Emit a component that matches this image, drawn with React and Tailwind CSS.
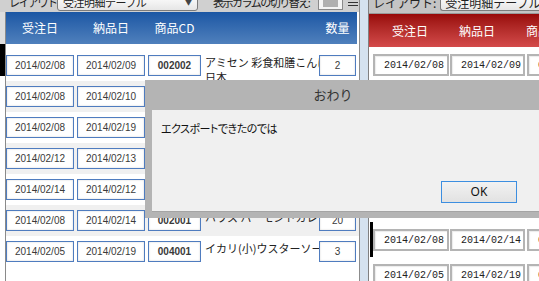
import React from "react";

const jp = "font-['Noto_Sans_CJK_JP',sans-serif]";

const rows = [
  { order: "2014/02/08", delivery: "2014/02/09", code: "002002", name: ["アミセン 彩食和膳こんにゃく", "日本"], qty: "2" },
  { order: "2014/02/08", delivery: "2014/02/10", code: "003105", name: ["ハウス ジャワカレー 中辛"], qty: "5" },
  { order: "2014/02/08", delivery: "2014/02/19", code: "001204", name: ["キッコーマン しょうゆ"], qty: "12" },
  { order: "2014/02/12", delivery: "2014/02/13", code: "002010", name: ["ミツカン 穀物酢"], qty: "6" },
  { order: "2014/02/14", delivery: "2014/02/12", code: "003001", name: ["日清 サラダ油"], qty: "4" },
  { order: "2014/02/08", delivery: "2014/02/14", code: "002001", name: ["ハウス バーモントカレー"], qty: "20" },
  { order: "2014/02/05", delivery: "2014/02/19", code: "004001", name: ["イカリ(小)ウスターソース"], qty: "3" },
];

// blue bordered field used in the left grid
const BlueBox = ({ w, bold, children }) => (
  <div
    className={`${w} h-[21px] shrink-0 flex items-center justify-center bg-white border border-[#4f7cbf] shadow-[inset_0_0_2px_rgba(0,0,0,0.18)] text-[#3a3a3a] font-['Liberation_Sans',sans-serif] ${
      bold ? "text-[10px] font-bold" : "text-[10px]"
    }`}
  >
    {children}
  </div>
);

// gray bordered field used in the right grid
const GrayBox = ({ w, children }) => (
  <div
    className={`${w} h-[22px] shrink-0 flex items-center pl-[9px] bg-white border-2 border-[#b4b4b4] shadow-[inset_1px_1px_1px_rgba(0,0,0,0.08)] text-[10px] text-[#222] font-['Liberation_Mono',monospace]`}
  >
    {children}
  </div>
);

const LeftWindow = () => (
  <div className="w-[360px] shrink-0 flex flex-col bg-white border-r border-[#8c8c8c]">
    {/* toolbar, mostly scrolled off the top */}
    <div className={`-mt-[8px] h-[20px] shrink-0 flex items-center bg-[#d0d0d0] text-[11px] text-[#222] whitespace-nowrap overflow-hidden ${jp}`}>
      <span className="ml-[9px] w-[48px] shrink-0 overflow-hidden tracking-[-1.5px]">レイアウト:</span>
      <div className="w-[141px] h-[17px] shrink-0 flex items-center justify-between px-[5px] rounded-[3px] border border-[#7c7c7c] bg-linear-to-b from-white to-[#e6e6e6]">
        <span className="tracking-[-0.5px]">受注明細テーブル</span>
        <span className="text-[7px] text-[#444]">▼</span>
      </div>
      <span className="ml-[15px] w-[105px] shrink-0 overflow-hidden tracking-[-1.5px]">表示カラムの切り替え:</span>
      <div className="w-[25px] h-[16px] shrink-0 border border-[#8a8a8a] bg-[#f4f4f4] flex items-center justify-center">
        <div className="w-[15px] h-[10px] bg-[#b0b0b0]" />
      </div>
      <div className="ml-[5px] w-[10px] shrink-0 flex flex-col gap-[2px]">
        <div className="h-px bg-[#333]" />
        <div className="h-px bg-[#333]" />
        <div className="h-px bg-[#333]" />
      </div>
    </div>

    <div className="flex flex-1">
      <div className="w-[5px] flex flex-col bg-white">
        <div className="h-[32px] bg-[#dedede]" />
        <div className="h-[32px] bg-black" />
      </div>
      <div className="w-px bg-[#8a8a8a]" />

      <div className="flex-1 flex flex-col">
        <div className={`h-[32px] mr-[2px] flex items-center bg-linear-to-b from-[#1b57a4] to-[#4f80bc] text-[12px] text-white ${jp}`}>
          <div className="w-[68px] text-center">受注日</div>
          <div className="ml-[3px] w-[68px] text-center">納品日</div>
          <div className="ml-[3px] w-[53px] text-center">商品CD</div>
          <div className="ml-[4px] w-[114px]" />
          <div className="w-[37px] text-center">数量</div>
        </div>
        <div className="h-[6px]" />

        {rows.map((r, i) => (
          <div
            key={i}
            className={`h-[31px] flex items-start pt-[5px] overflow-hidden ${i % 2 ? "bg-[#f0f0f0]" : "bg-white"}`}
          >
            <BlueBox w="w-[68px]">{r.order}</BlueBox>
            <div className="ml-[3px]">
              <BlueBox w="w-[68px]">{r.delivery}</BlueBox>
            </div>
            <div className="ml-[3px]">
              <BlueBox w="w-[53px]" bold>
                {r.code}
              </BlueBox>
            </div>
            <div className={`ml-[4px] w-[114px] h-[26px] overflow-hidden text-[11px] leading-[15px] text-[#222] ${jp}`}>
              {r.name.map((line, j) => (
                <div key={j} className="whitespace-nowrap">
                  {line}
                </div>
              ))}
            </div>
            <BlueBox w="w-[37px]">{r.qty}</BlueBox>
          </div>
        ))}
      </div>
    </div>
  </div>
);

const RightWindow = () => (
  <div className="flex-1 flex flex-col bg-white border-l border-[#808080] overflow-hidden">
    <div className={`-mt-[8px] h-[22px] shrink-0 flex items-center bg-[#c4c4c4] border-b border-[#999] text-[12px] text-[#222] ${jp}`}>
      <span className="ml-[4px] whitespace-nowrap">レイアウト:</span>
      <div className="ml-[4px] flex-1 h-[17px] flex items-center px-[4px] rounded-l-[3px] border border-r-0 border-[#7c7c7c] bg-linear-to-b from-white to-[#e6e6e6] whitespace-nowrap">
        受注明細テーブル
      </div>
    </div>

    <div className={`h-[33px] shrink-0 flex items-center pl-[23px] gap-[31px] bg-linear-to-b from-[#980808] to-[#d44a4a] text-[12px] text-white whitespace-nowrap ${jp}`}>
      <span>受注日</span>
      <span>納品日</span>
      <span>商品CD</span>
    </div>
    <div className="h-px bg-[#c8c8c8]" />

    <div className="flex flex-1">
      <div className="w-[4px] flex flex-col">
        <div className="h-[175px]" />
        <div className="ml-[1px] w-[3px] h-[35px] bg-black" />
      </div>
      <div className="flex-1 flex flex-col">
        {rows.map((r, i) => (
          <div key={i} className="h-[35px] shrink-0 flex items-start pt-[7px] bg-white">
            <GrayBox w="w-[76px]">{r.order}</GrayBox>
            <div className="ml-[1px]">
              <GrayBox w="w-[75px]">{r.delivery}</GrayBox>
            </div>
            <div className="ml-[2px]">
              <GrayBox w="w-[76px]">{r.code}</GrayBox>
            </div>
          </div>
        ))}
      </div>
    </div>
  </div>
);

const Dialog = () => (
  <div className="absolute left-[145px] top-[80px] right-0 h-[138px] flex flex-col bg-[#b4b4b4]">
    <div className={`h-[30px] shrink-0 flex items-center justify-center pr-[18px] text-[13px] text-[#333] ${jp}`}>
      おわり
    </div>
    <div className="ml-[7px] h-[102px] flex flex-col justify-between bg-[#f0f0f0] border-b border-[#a4a4a4]">
      <div className={`pl-[9px] pt-[11px] text-[11px] leading-[14px] tracking-[-0.5px] text-[#111] [font-feature-settings:"palt"] ${jp}`}>
        エクスポートできたのでは
      </div>
      <div className="flex justify-end pr-[22px] pb-[8px]">
        <button
          type="button"
          className="w-[76px] h-[22px] border border-[#3c8ee0] bg-linear-to-b from-[#f2f2f2] to-[#e2e2e2] text-[12px] text-[#111] font-['Noto_Sans',sans-serif]"
        >
          OK
        </button>
      </div>
    </div>
  </div>
);

export default function App() {
  return (
    <div className="relative w-[539px] h-[281px] overflow-hidden flex bg-white">
      <LeftWindow />
      <div className="w-[8px] shrink-0 bg-[#d5e2ef]" />
      <RightWindow />
      <Dialog />
    </div>
  );
}
